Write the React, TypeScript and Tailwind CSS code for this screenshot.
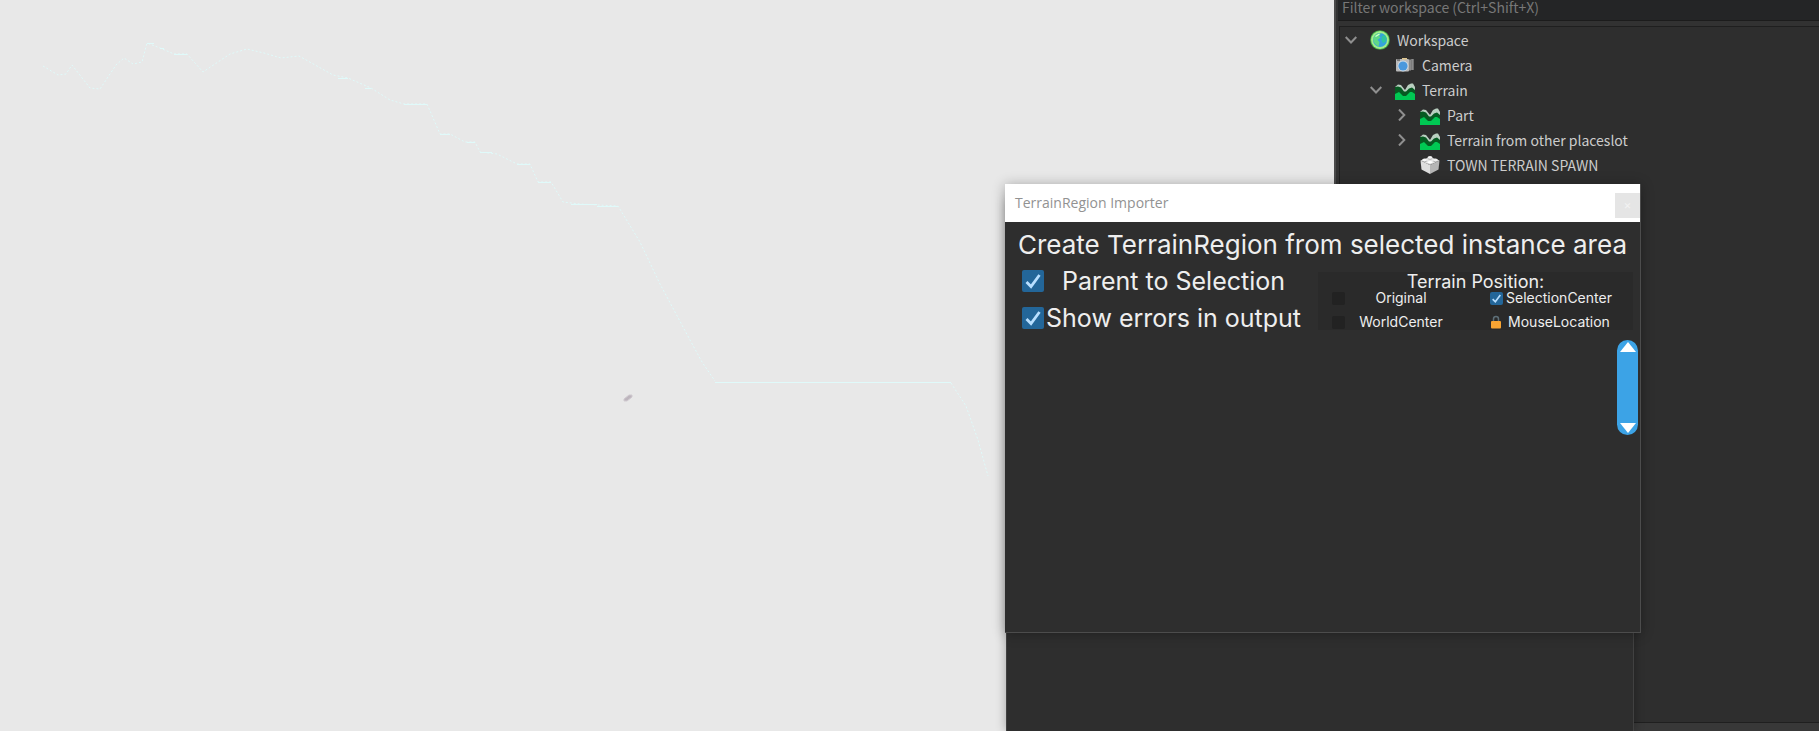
import { useState } from 'react'
import type { ReactNode } from 'react'

type Node = {
  name: string
  icon: ReactNode
  open?: boolean
  children?: Node[]
}

function GlobeIcon() {
  return (
    <svg viewBox="0 0 20 20" className="size-5">
      <circle cx="10" cy="10" r="9.8" fill="#3fae49" />
      <circle cx="10" cy="10" r="8.900" fill="#a4ec8c" />
      <circle cx="10" cy="10" r="7" fill="#35a3dc" />
      <path d="M4 6.500C5 4 8 3 11 3.400L9 6l1.600 1.500L7.500 10l2 2-1 4.500C5 15 3 12 3.200 9z" fill="#5fd886" />
      <path d="M12 6l3-1 1.800 3.500-1.500 3.500-2.500 1-1.500-3.500z" fill="#2fc5a0" />
      <path d="M5.500 6.500L9.500 4" stroke="#d8ffd0" strokeWidth="1.200" />
    </svg>
  )
}

function CameraIcon() {
  return (
    <svg viewBox="0 0 20 20" className="size-5">
      <path d="M14 4.500h2v11h-2z" fill="#8b8b8b" />
      <path d="M16.500 4h2.500v11h-2.500z" fill="#6f6f6f" />
      <path d="M17 4v11" stroke="#a8a8a8" />
      <rect x="1" y="4" width="13" height="12.500" rx="1" fill="#b9b9b9" />
      <path d="M2 4h3v2H2z" fill="#777" />
      <path d="M7 3h5v1.500H7z" fill="#e0c890" />
      <circle cx="8" cy="11" r="5.400" fill="#d5dfe8" />
      <circle cx="8" cy="11" r="4.600" fill="#4a98dd" />
    </svg>
  )
}

function TerrainIcon() {
  return (
    <svg viewBox="0 0 20 20" className="size-5">
      <path d="M0 7L3 4.500L6 5L10 10L13 5L16 3.500H18L20 7V13H0z" fill="#b9cfc0" />
      <path d="M0 7L3 6.500L6 7.500L9 11.500H11L14 8.500L17 7.500L20 10V17H0z" fill="#075a22" />
      <path d="M0 14L4 12L8 16H11L15 12H17L20 14V20H0z" fill="#00c853" />
    </svg>
  )
}

function PartsIcon() {
  return (
    <svg viewBox="0 0 20 20" className="size-5">
      <path d="M0.500 5.500L10 2l9.500 3.500L10 10z" fill="#e6e6e6" />
      <path d="M0.500 5.500L10 10v9L1.500 14.500z" fill="#dedede" />
      <path d="M19.500 5.500L10 10v9l8.500-4.500z" fill="#b5b5b5" />
      <ellipse cx="10" cy="2.500" rx="2.500" ry="1.500" fill="#f5f5f5" />
      <ellipse cx="4.500" cy="5" rx="2.300" ry="1.500" fill="#f8f8f8" />
      <ellipse cx="15.500" cy="5" rx="2.300" ry="1.500" fill="#f0f0f0" />
      <ellipse cx="10" cy="7.500" rx="2.500" ry="1.500" fill="#fff" />
      <path d="M2.300 6.200q2.200 1.300 4.400 0M7.700 3.700q2.300 1.300 4.600 0M13.300 6.200q2.200 1.300 4.400 0M7.700 8.700q2.300 1.300 4.600 0" stroke="#999" strokeWidth="0.700" fill="none" />
    </svg>
  )
}

function LockIcon() {
  return (
    <svg viewBox="0 0 12 14" className="h-3.5 w-3">
      <path d="M3.500 7V4a2.500 2.500 0 0 1 5 0v3" fill="none" stroke="#5d6f78" strokeWidth="1.500" />
      <rect x="1" y="6" width="10" height="7.500" rx="1" fill="#f9a533" />
    </svg>
  )
}

const tree: Node[] = [
  {
    name: 'Workspace',
    icon: <GlobeIcon />,
    open: true,
    children: [
      { name: 'Camera', icon: <CameraIcon /> },
      {
        name: 'Terrain',
        icon: <TerrainIcon />,
        open: true,
        children: [
          { name: 'Part', icon: <TerrainIcon />, children: [] },
          { name: 'Terrain from other placeslot', icon: <TerrainIcon />, children: [] },
          { name: 'TOWN TERRAIN SPAWN', icon: <PartsIcon /> },
        ],
      },
    ],
  },
]

function TreeItem({ node }: { node: Node }) {
  const [open, setOpen] = useState(!!node.open)

  return (
    <li>
      <div className="flex h-[25px] items-center">
        {node.children ? (
          <button
            aria-label={`Toggle ${node.name}`}
            aria-expanded={open}
            onClick={() => setOpen(!open)}
            className="flex h-5 w-[25px] items-center"
          >
            <svg viewBox="0 0 12 12" className="size-3" fill="none" stroke="#8f8f8f" strokeWidth="2">
              <path d={open ? 'M0.700 3L6 8.500L11.300 3' : 'M4 0.500L9.300 6L4 11.500'} />
            </svg>
          </button>
        ) : (
          <span className="w-[25px]" />
        )}
        {node.icon}
        <span className="ml-[7px] leading-5 whitespace-nowrap">{node.name}</span>
      </div>
      {open && node.children && (
        <ul className="pl-[25px]">
          {node.children.map((child) => (
            <TreeItem key={child.name} node={child} />
          ))}
        </ul>
      )}
    </li>
  )
}

function Explorer() {
  return (
    <aside className="flex w-[485px] shrink-0 flex-col border-l-2 border-[#4a4a4a] bg-[#323232] font-['Noto_Sans_CJK_SC','Noto_Sans',sans-serif] text-sm text-[#cccccc]">
      <input
        aria-label="Filter workspace"
        placeholder="Filter workspace (Ctrl+Shift+X)"
        className="ml-0.5 h-[21px] border-b border-[#1c1c1c] bg-[#242526] px-1 pb-1.5 leading-4 outline-none placeholder:text-[#777777]"
      />
      <ul className="mt-[5px] ml-[3px] grow border-t border-l border-[#1f1f1f] bg-[#2e2e2e] pl-[5px]">
        {tree.map((node) => (
          <TreeItem key={node.name} node={node} />
        ))}
      </ul>
      <footer className="h-[9px] border-t border-[#1f1f1f] bg-[#383838]" />
    </aside>
  )
}

function Check({ id, small, checked }: { id: string; small?: boolean; checked?: boolean }) {
  const [on, setOn] = useState(!!checked)

  return (
    <span className={small ? 'relative size-[13px] shrink-0' : 'relative size-[22px] shrink-0'}>
      <input
        id={id}
        type="checkbox"
        checked={on}
        onChange={(e) => setOn(e.target.checked)}
        className="block size-full appearance-none rounded-xs bg-[#222222] checked:bg-[#236699]"
      />
      {on && (
        <svg viewBox="0 0 22 22" className="pointer-events-none absolute inset-0" fill="none">
          <path d="M4.500 12L9 16.500L17.500 5" stroke="#b8dfff" strokeWidth="2.800" />
        </svg>
      )}
    </span>
  )
}

function Importer() {
  return (
    <section className="absolute top-[184px] right-[178px] flex h-[449px] w-[636px] flex-col border-r border-b border-[#4c4c4c] bg-[#2e2e2e] font-[Inter,sans-serif] text-[#eeeeee] shadow-[0_1px_12px_rgba(0,0,0,0.3)]">
      <header className="flex h-[38px] shrink-0 items-center justify-between bg-white pl-[10px]">
        <h1 className="font-['Open_Sans',sans-serif] text-sm text-[#929292]">TerrainRegion Importer</h1>
        <button aria-label="Close" className="mt-1 size-[25px] bg-[#e5e5e5] text-xs leading-none text-[#f2f2f2]">
          ×
        </button>
      </header>

      <h2 className="pt-[7px] text-center text-[26px] leading-8">Create TerrainRegion from selected instance area</h2>

      <div className="flex justify-between pt-1 pr-[7px] pl-[17px]">
        <div className="flex w-[281px] flex-col gap-[5px] text-[25px] leading-8">
          <div className="flex items-center">
            <Check id="parent" checked />
            <label htmlFor="parent" className="grow text-center whitespace-nowrap">
              Parent to Selection
            </label>
          </div>
          <div className="flex items-center">
            <Check id="errors" checked />
            <label htmlFor="errors" className="grow text-center whitespace-nowrap">
              Show errors in output
            </label>
          </div>
        </div>

        <fieldset className="mt-[7px] h-[58px] w-[315px] bg-[#2a2a2a] pl-[14px] text-sm leading-6">
          <h3 className="-ml-[14px] text-center text-lg leading-5">Terrain Position:</h3>
          <div className="-mt-1.5 grid grid-cols-[158px_1fr]">
            <div className="flex h-6 items-center">
              <Check id="original" small />
              <label htmlFor="original" className="w-[112px] text-center">Original</label>
            </div>
            <div className="flex h-6 items-center">
              <Check id="selection" small checked />
              <label htmlFor="selection" className="w-[112px] text-center">SelectionCenter</label>
            </div>
            <div className="flex h-6 items-center">
              <Check id="world" small />
              <label htmlFor="world" className="w-[112px] text-center">WorldCenter</label>
            </div>
            <div className="flex h-6 items-center">
              <LockIcon />
              <span className="w-[114px] text-center">MouseLocation</span>
            </div>
          </div>
        </fieldset>
      </div>

      <div className="mt-1.5 mr-[2px] flex h-[95px] w-[21px] flex-col justify-between self-end rounded-full bg-[#3ca3e6]">
        <button aria-label="Scroll up" className="flex h-4 items-start justify-center pt-[2px]">
          <svg viewBox="0 0 16 10" className="h-2.5 w-4" fill="#fff">
            <path d="M8 0L16 10H0z" />
          </svg>
        </button>
        <button aria-label="Scroll down" className="flex h-4 items-end justify-center pb-[2px]">
          <svg viewBox="0 0 16 10" className="h-2.5 w-4" fill="#fff">
            <path d="M8 10L16 0H0z" />
          </svg>
        </button>
      </div>
    </section>
  )
}

function Viewport() {
  return (
    <div className="grow overflow-hidden bg-[#e8e8e8]">
      <svg viewBox="0 0 1000 731" className="h-[731px] w-[1000px]" fill="none" stroke="#e0fafa">
        <path
          strokeDasharray="2 2"
          d="M43 66L58 75L66 74L72 65L90 88L100 89L116 65L124 58L133 64L142 62L147 43L160 48L174 54L187 54L203 72L230 54L247 49L264 53L281 58L299 56L333 75L348 78L371 88L390 100L404 104L427 104L440 134L450 134L465 142L475 142L480 152L497 154L517 164L530 164L538 182L551 182L563 202L580 204L618 206L640 242L660 284L690 340L702 362L715 381M951 383L966 406L978 440L988 476"
        />
        <path d="M147 43.500H154M160 48.500H164M174 54.500H187M338 78.500H348M365 88.500H371M404 104.500H427M440 134.500H450M467 142.500H475M480 152.500H492M517 164.500H530M538 182.500H551M571 204.500H597M597 206.500H618" />
        <path d="M715 382.500H951" />
        <path d="M624 399l5-4h3v2l-5 4h-3z" fill="#bdb5bd" stroke="#d0cad0" />
      </svg>
    </div>
  )
}

export default function App() {
  return (
    <main className="relative flex min-h-screen overflow-hidden bg-[#e8e8e8]">
      <Viewport />
      <Explorer />
      <div className="absolute top-[200px] right-[185px] bottom-0 w-[628px] border-x border-[#414141] bg-[#2e2e2e] shadow-[0_0_10px_rgba(0,0,0,0.3)]" />
      <Importer />
    </main>
  )
}
